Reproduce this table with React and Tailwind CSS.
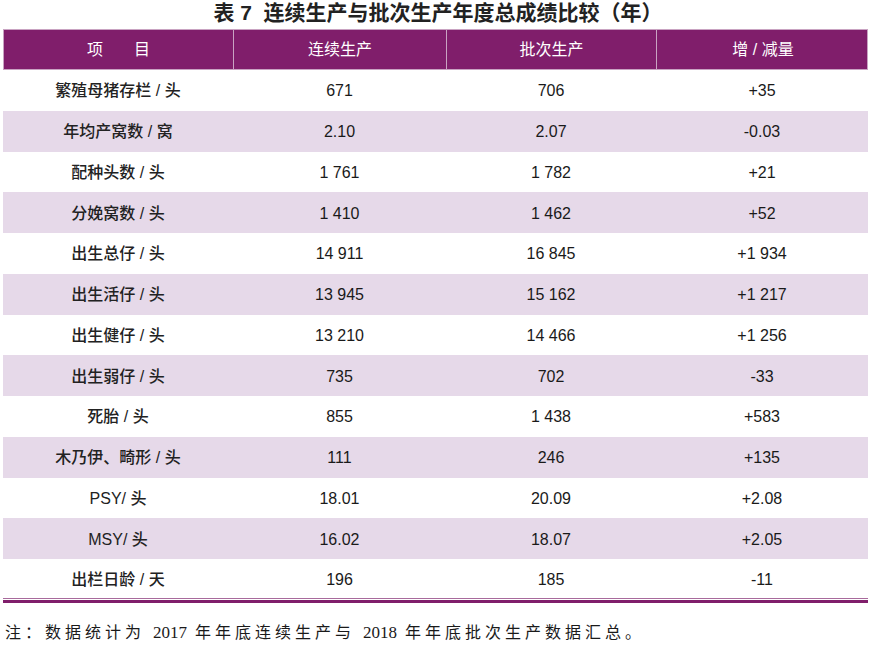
import React from 'react';

const rows = [
  ['繁殖母猪存栏 / 头', '671', '706', '+35'],
  ['年均产窝数 / 窝', '2.10', '2.07', '-0.03'],
  ['配种头数 / 头', '1 761', '1 782', '+21'],
  ['分娩窝数 / 头', '1 410', '1 462', '+52'],
  ['出生总仔 / 头', '14 911', '16 845', '+1 934'],
  ['出生活仔 / 头', '13 945', '15 162', '+1 217'],
  ['出生健仔 / 头', '13 210', '14 466', '+1 256'],
  ['出生弱仔 / 头', '735', '702', '-33'],
  ['死胎 / 头', '855', '1 438', '+583'],
  ['木乃伊、畸形 / 头', '111', '246', '+135'],
  ['PSY/ 头', '18.01', '20.09', '+2.08'],
  ['MSY/ 头', '16.02', '18.07', '+2.05'],
  ['出栏日龄 / 天', '196', '185', '-11'],
];

const sans = { fontFamily: '"Liberation Sans", "Noto Sans CJK SC", sans-serif' };
const serif = { fontFamily: '"Liberation Serif", "Noto Sans CJK SC", serif' };

const App = () => {
  return (
    <div className="w-[876px] h-[650px] bg-white text-[#1a1a1a]" style={sans}>
      <h1 className="h-[29px] text-center text-[21px] leading-[26px] font-bold text-[#222]">
        表 7&nbsp;&nbsp;连续生产与批次生产年度总成绩比较（年）
      </h1>
      <div className="ml-[3px] w-[865px]">
        <div className="grid grid-cols-[230px_213px_210px_212px] h-[41px] bg-[#801e6b] border border-[#c9a3c2] text-white text-[16px]">
          <div className="flex items-center justify-center border-r border-[#c9a3c2]">项&nbsp;&nbsp;&nbsp;&nbsp;&nbsp;&nbsp;&nbsp;目</div>
          <div className="flex items-center justify-center border-r border-[#c9a3c2]">连续生产</div>
          <div className="flex items-center justify-center border-r border-[#c9a3c2]">批次生产</div>
          <div className="flex items-center justify-center">增 / 减量</div>
        </div>
        {rows.map((r, i) => (
          <div
            key={r[0]}
            className={`grid grid-cols-[230px_213px_210px_212px] pt-[2px] text-[16px] ${i === rows.length - 1 ? 'h-[39px]' : 'h-[40.75px]'} ${i % 2 === 1 ? 'bg-[#e6d9e9]' : 'bg-white'}`}
          >
            <div className="flex items-center justify-center font-medium text-[#222]">{r[0]}</div>
            <div className="flex items-center justify-center">{r[1]}</div>
            <div className="flex items-center justify-center">{r[2]}</div>
            <div className="flex items-center justify-center">{r[3]}</div>
          </div>
        ))}
        <div className="h-[1px] bg-[#a86a9c]" />
        <div className="h-[1px]" />
        <div className="h-[3px] bg-[#801e6b]" />
      </div>
      <p className="mt-[20px] pl-[5px] text-[16px] leading-[20px] tracking-[4px] text-[#1a1a1a]" style={serif}>
        注：数据统计为 <span className="text-[17px] tracking-normal">2017</span> 年年底连续生产与 <span className="text-[17px] tracking-normal">2018</span> 年年底批次生产数据汇总。
      </p>
    </div>
  );
};

export default App;
